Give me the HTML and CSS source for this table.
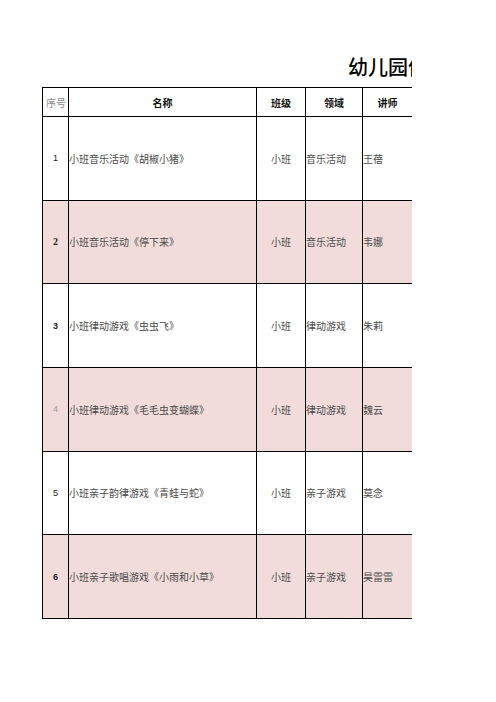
FILE: index.html
```html
<!DOCTYPE html>
<html lang="zh">
<head>
<meta charset="utf-8">
<title>幼儿园</title>
<link rel="stylesheet" href="styles.css">
</head>
<body>
<div class="sheet">
  <div class="title">幼儿园优秀教学活动视频</div>
  <table class="grid">
    <colgroup>
      <col class="c-no"><col class="c-name"><col class="c-cls"><col class="c-area"><col class="c-tch">
    </colgroup>
    <thead>
      <tr class="head">
        <th class="h-no">序号</th>
        <th>名称</th>
        <th>班级</th>
        <th>领域</th>
        <th>讲师</th>
      </tr>
    </thead>
    <tbody>
      <tr>
        <td class="no n-sans">1</td>
        <td class="txt">小班音乐活动《胡椒小猪》</td>
        <td class="txt ctr">小班</td>
        <td class="txt">音乐活动</td>
        <td class="txt">王蓓</td>
      </tr>
      <tr class="pink">
        <td class="no n-serif">2</td>
        <td class="txt">小班音乐活动《停下来》</td>
        <td class="txt ctr">小班</td>
        <td class="txt">音乐活动</td>
        <td class="txt">韦娜</td>
      </tr>
      <tr>
        <td class="no n-bold">3</td>
        <td class="txt">小班律动游戏《虫虫飞》</td>
        <td class="txt ctr">小班</td>
        <td class="txt">律动游戏</td>
        <td class="txt">朱莉</td>
      </tr>
      <tr class="pink">
        <td class="no n-gray">4</td>
        <td class="txt">小班律动游戏《毛毛虫变蝴蝶》</td>
        <td class="txt ctr">小班</td>
        <td class="txt">律动游戏</td>
        <td class="txt">魏云</td>
      </tr>
      <tr>
        <td class="no n-sans">5</td>
        <td class="txt">小班亲子韵律游戏《青蛙与蛇》</td>
        <td class="txt ctr">小班</td>
        <td class="txt">亲子游戏</td>
        <td class="txt">莫念</td>
      </tr>
      <tr class="pink">
        <td class="no n-bold">6</td>
        <td class="txt">小班亲子歌唱游戏《小雨和小草》</td>
        <td class="txt ctr">小班</td>
        <td class="txt">亲子游戏</td>
        <td class="txt">昊雷雷</td>
      </tr>
    </tbody>
  </table>
</div>
</body>
</html>
```
FILE: styles.css
```css
html, body {
  margin: 0;
  padding: 0;
  background: #ffffff;
}

body {
  font-family: "Liberation Serif", "Noto Sans CJK SC", serif;
  color: #3a3a3a;
}

.sheet {
  margin-left: 42px;
  width: 370px;
  overflow: hidden;
  padding-top: 57px;
}

.title {
  padding-left: 306px;
  height: 20px;
  line-height: 20px;
  font-size: 20px;
  font-weight: 500;
  font-family: "Noto Sans CJK SC", sans-serif;
  color: #000000;
  white-space: nowrap;
  margin-bottom: 10px;
}

.grid {
  border-collapse: collapse;
  table-layout: fixed;
  width: 370px;
}

.c-no { width: 26px; }
.c-name { width: 188px; }
.c-cls { width: 49px; }
.c-area { width: 57px; }
.c-tch { width: 50px; }

.grid th,
.grid td {
  border: 1px solid #000000;
  padding: 0;
  vertical-align: middle;
  overflow: hidden;
  white-space: nowrap;
}

.head th {
  height: 28px;
  font-family: "Noto Sans CJK SC", sans-serif;
  font-size: 10px;
  font-weight: 700;
  color: #111111;
  text-align: center;
}

.head .h-no {
  font-weight: 400;
  color: #8a8a8a;
  text-align: left;
  padding-left: 3px;
}

.grid tbody td {
  height: 82.67px;
}

.pink td {
  background: #f2dcdb;
}

.txt {
  font-family: "Noto Sans CJK SC", serif;
  font-size: 10px;
  font-weight: 400;
  color: #4a4a4a;
  padding-left: 2px;
  text-align: left;
}

.txt.ctr {
  text-align: center;
  padding-left: 0;
}

.no {
  text-align: center;
  font-size: 9px;
  color: #222222;
}

.n-sans {
  font-family: "Liberation Sans", sans-serif;
}

.n-serif {
  font-family: "Liberation Serif", serif;
  font-weight: 700;
  font-size: 10px;
}

.n-bold {
  font-family: "Liberation Sans", sans-serif;
  font-weight: 700;
}

.n-gray {
  font-family: "Liberation Sans", sans-serif;
  color: #9a9a9a;
}
```
